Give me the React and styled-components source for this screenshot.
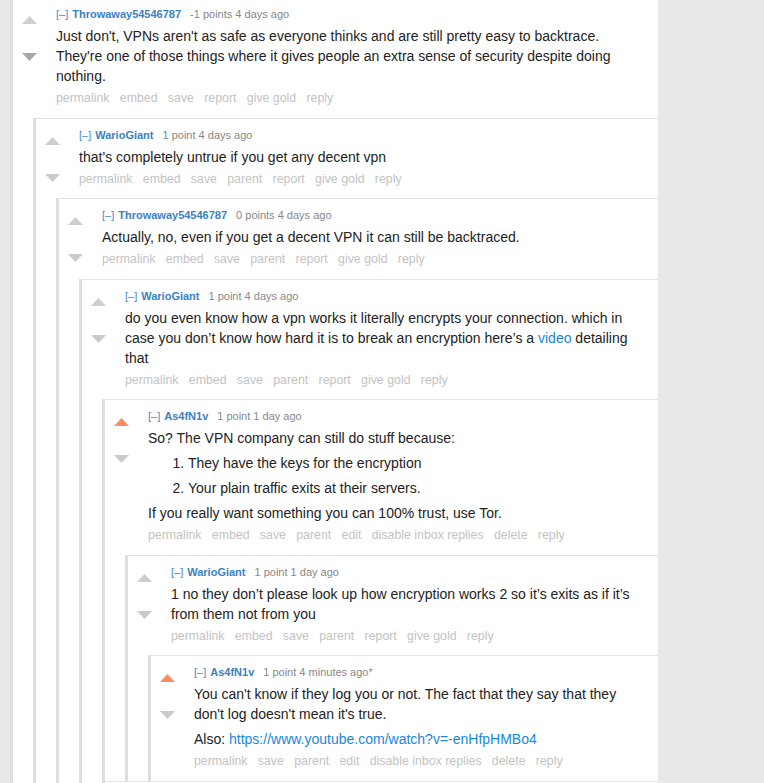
import React from "react";
import styled, { createGlobalStyle } from "styled-components";

const GlobalStyle = createGlobalStyle`
  html, body {
    margin: 0;
    background: #e8e8e8;
  }
  body {
    font-family: "Liberation Sans", Arial, sans-serif;
  }
`;

const GRAY_BUTTONS = ["permalink", "embed", "save", "parent", "report", "give gold", "reply"];
const OWN_BUTTONS = ["permalink", "embed", "save", "parent", "edit", "disable inbox replies", "delete", "reply"];

// built lazily so the styled parts below exist before the bodies are made
const makeThread = () => ({
  author: "Throwaway54546787",
  score: "-1 points",
  age: "4 days ago",
  downDark: true,
  buttons: ["permalink", "embed", "save", "report", "give gold", "reply"],
  body: (
    <Para>
      Just don't, VPNs aren't as safe as everyone thinks and are still pretty easy to backtrace.
      They're one of those things where it gives people an extra sense of security despite doing
      nothing.
    </Para>
  ),
  replies: [
    {
      author: "WarioGiant",
      score: "1 point",
      age: "4 days ago",
      buttons: GRAY_BUTTONS,
      body: <Para>that’s completely untrue if you get any decent vpn</Para>,
      replies: [
        {
          author: "Throwaway54546787",
          score: "0 points",
          age: "4 days ago",
          buttons: GRAY_BUTTONS,
          body: <Para>Actually, no, even if you get a decent VPN it can still be backtraced.</Para>,
          replies: [
            {
              author: "WarioGiant",
              score: "1 point",
              age: "4 days ago",
              buttons: GRAY_BUTTONS,
              more: true,
              body: (
                <Para>
                  do you even know how a vpn works it literally encrypts your connection. which in
                  case you don’t know how hard it is to break an encryption here’s a{" "}
                  <Link href="#">video</Link> detailing that
                </Para>
              ),
              replies: [
                {
                  author: "As4fN1v",
                  score: "1 point",
                  age: "1 day ago",
                  upvoted: true,
                  buttons: OWN_BUTTONS,
                  body: (
                    <>
                      <Para>So? The VPN company can still do stuff because:</Para>
                      <List>
                        <li>They have the keys for the encryption</li>
                        <li>Your plain traffic exits at their servers.</li>
                      </List>
                      <Para>If you really want something you can 100% trust, use Tor.</Para>
                    </>
                  ),
                  replies: [
                    {
                      author: "WarioGiant",
                      score: "1 point",
                      age: "1 day ago",
                      buttons: GRAY_BUTTONS,
                      body: (
                        <Para>
                          1 no they don’t please look up how encryption works 2 so it’s exits as if
                          it’s from them not from you
                        </Para>
                      ),
                      replies: [
                        {
                          author: "As4fN1v",
                          score: "1 point",
                          age: "4 minutes ago*",
                          upvoted: true,
                          buttons: ["permalink", "save", "parent", "edit", "disable inbox replies", "delete", "reply"],
                          body: (
                            <>
                              <Para>
                                You can't know if they log you or not. The fact that they say that
                                they don't log doesn't mean it's true.
                              </Para>
                              <Para>
                                Also:{" "}
                                <Link href="#">https://www.youtube.com/watch?v=-enHfpHMBo4</Link>
                              </Para>
                            </>
                          ),
                          replies: [],
                        },
                      ],
                    },
                  ],
                },
              ],
            },
          ],
        },
      ],
    },
  ],
});

const Arrow = ({ down, tone }) => (
  <ArrowSvg width="15" height="8" viewBox="0 0 15 8" $down={down}>
    <polygon points={down ? "0,0 15,0 7.5,8" : "0,8 7.5,0 15,8"} fill={tone} />
  </ArrowSvg>
);

const Comment = ({ c, nested }) => (
  <CommentBox $nested={nested}>
    <Entry>
      <Voter>
        <Arrow tone={c.upvoted ? "#ff8b60" : "#cecece"} />
        <Arrow down tone={c.downDark ? "#a9a9a9" : "#cacaca"} />
      </Voter>
      <Main>
        <Tagline>
          <Expand>[–]</Expand>
          <Author>{c.author}</Author>
          <Score>
            {c.score} {c.age}
          </Score>
        </Tagline>
        <Body>{c.body}</Body>
        <Buttons>
          {c.buttons.map((b) => (
            <li key={b}>{b}</li>
          ))}
        </Buttons>
      </Main>
    </Entry>
    {c.replies.map((r, i) => (
      <Comment key={i} c={r} nested />
    ))}
    {c.more && <MoreRow />}
  </CommentBox>
);

export default function App() {
  const thread = makeThread();
  return (
    <>
      <GlobalStyle />
      <Page>
        <Column>
          <Comment c={thread} />
        </Column>
      </Page>
    </>
  );
}

const Page = styled.div`
  padding-left: 10px;
  margin-top: -3px;
`;

const Column = styled.div`
  width: 648px;
  background: #fff;
`;

const CommentBox = styled.div`
  border-left: 3px solid #dedede;
  border-top: 1px solid #e3e3e3;
  margin-left: ${(p) => (p.$nested ? "20px" : "0")};
`;

const MoreRow = styled.div`
  margin-left: 20px;
  height: 40px;
  border-left: 3px solid #dedede;
  border-top: 1px solid #e3e3e3;
`;

const Entry = styled.div`
  display: flex;
`;

const Voter = styled.div`
  width: 43px;
  flex-shrink: 0;
  padding-top: 18px;
  display: flex;
  flex-direction: column;
  align-items: flex-start;
`;

const ArrowSvg = styled.svg`
  display: block;
  margin-left: 9px;
  margin-top: ${(p) => (p.$down ? "29px" : "0")};
`;

const Main = styled.div`
  flex: 1;
  min-width: 0;
  padding-top: 9px;
  padding-right: 10px;
`;

const Tagline = styled.div`
  font-size: 11px;
  line-height: 14px;
  color: #888;
  white-space: nowrap;
`;

const Expand = styled.span`
  color: #4a89c6;
`;

const Author = styled.span`
  color: #3a82c2;
  font-weight: bold;
  margin-left: 4px;
`;

const Score = styled.span`
  margin-left: 9px;
`;

const Body = styled.div`
  margin-top: 5px;
  font-size: 14px;
  line-height: 20px;
  color: #222;

  & > * {
    margin: 0;
  }
  & > * + * {
    margin-top: 5px;
  }
`;

const Para = styled.p``;

const List = styled.ol`
  padding-left: 40px;

  li + li {
    margin-top: 5px;
  }
`;

const Link = styled.a`
  color: #1787dd;
  text-decoration: none;
`;

const Buttons = styled.ul`
  display: flex;
  gap: 10.3px;
  list-style: none;
  margin: 4px 0 11.5px;
  padding: 0;
  font-size: 12.35px;
  line-height: 16px;
  color: #c3c3c3;
  white-space: nowrap;
`;
